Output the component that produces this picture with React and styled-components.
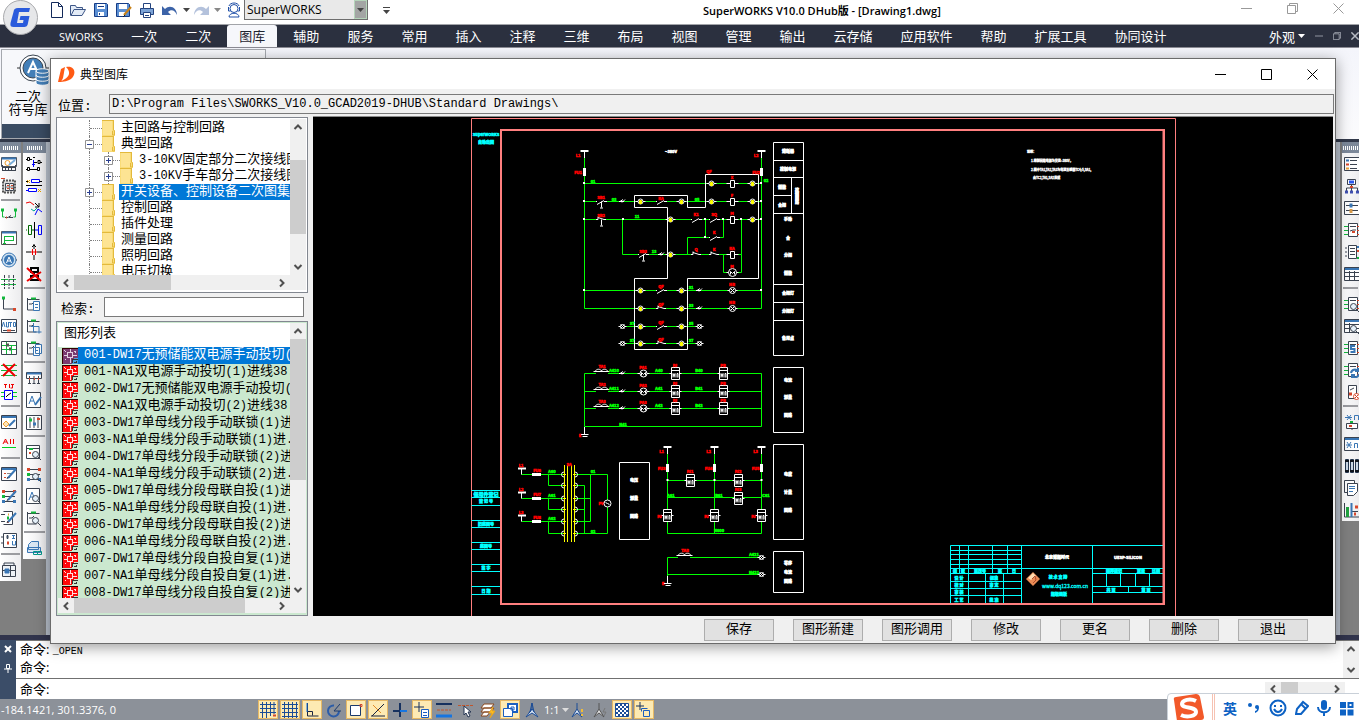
import React, { useState } from "react";
import styled, { createGlobalStyle } from "styled-components";

const dark = "#3b4350";
const blue = "#3a77b5";
const green = "#12b83c";
const red = "#d7472b";

const GlobalStyle = createGlobalStyle`
  * {
    box-sizing: border-box;
  }
  body {
    margin: 0;
    background: #808080;
    font-family: "Open Sans", "Noto Sans CJK SC", sans-serif;
    font-size: 13px;
    color: #000;
  }
  button, input, select {
    font: inherit;
    color: inherit;
    margin: 0;
    padding: 0;
  }
  ul {
    list-style: none;
    margin: 0;
    padding: 0;
  }
  svg {
    display: block;
    flex: none;
  }
`;

/* ---------- application shell ---------- */

const Screen = styled.div`
  position: relative;
  display: flex;
  flex-direction: column;
  min-height: 100vh;
  overflow: hidden;
`;

const TitleBar = styled.header`
  display: flex;
  align-items: center;
  height: 24px;
  padding-left: 48px;
  background: #fff;
`;

const AppLogo = styled.div`
  position: absolute;
  z-index: 1;
  top: 0;
  left: 3px;
`;

const QuickAccess = styled.div`
  display: flex;
  align-items: center;
  height: 20px;
  align-self: flex-start;
`;

const QuickButton = styled.button`
  display: flex;
  justify-content: center;
  align-items: center;
  width: ${(props) => props.$width || 22}px;
  height: 20px;
  border: none;
  background: none;
`;

const WorkspaceSelect = styled.div`
  display: flex;
  width: 124px;
  height: 20px;
  border: 1px solid #6e6e6e;
  border-top: none;
  background: #e9e9e9;
`;

const Select = styled.select`
  flex: 1;
  appearance: none;
  border: none;
  background: transparent;
  padding-left: 2px;
  font-size: 12px;
`;

const SelectArrow = styled.span`
  display: flex;
  align-items: center;
  justify-content: center;
  width: 13px;
  background: #a3a5a4;
  border: 1px solid #b5d5ba;
`;

const WindowTitle = styled.h1`
  flex: 1;
  margin: 0 0 2px;
  padding-left: 298px;
  font-size: 11px;
  line-height: 20px;
  font-weight: 600;
  white-space: nowrap;
`;

const WindowControls = styled.div`
  display: flex;
  height: 16px;
  padding-right: 10px;
  gap: 25px;
  align-self: flex-start;
`;

const ControlButton = styled.button`
  display: flex;
  align-items: center;
  justify-content: center;
  width: 21px;
  height: 16px;
  border: none;
  background: none;
`;

const MenuBar = styled.nav`
  display: flex;
  height: 24px;
  padding-left: 45px;
  background: #2b303f;
  border-top: 1px solid #a2a4a9;
  border-bottom: 1px solid #8b8b94;
`;

const MenuItem = styled.button`
  height: 22px;
  border: none;
  margin: ${(props) => (props.$active ? "0 2px" : "0")};
  padding: 0 ${(props) => (props.$active ? 12 : 14)}px;
  border-radius: 3px 3px 0 0;
  background: ${(props) => (props.$active ? "#f6f7fb" : "transparent")};
  color: ${(props) => (props.$active ? "#1f2430" : "#fff")};
  line-height: 21px;
  white-space: nowrap;
`;

const MenuLatin = styled.span`
  font-size: 11px;
`;

const MenuRight = styled.div`
  display: flex;
  align-items: center;
  gap: 10px;
  margin-left: auto;
  color: #fff;
`;

const AppearanceButton = styled.button`
  display: flex;
  align-items: center;
  gap: 3px;
  border: none;
  background: none;
`;

const Ribbon = styled.section`
  height: 94px;
  padding: 1px;
  background: linear-gradient(#f4f5fb, #fbfbfd);
  border-bottom: 3px solid #32394a;
`;

const RibbonPanel = styled.div`
  display: flex;
  flex-direction: column;
  width: 265px;
  height: 90px;
  border: 1px solid #a5a8ae;
  background: #f7f8fb;
`;

const RibbonButton = styled.button`
  display: flex;
  flex-direction: column;
  align-items: center;
  width: 52px;
  height: 74px;
  padding-top: 4px;
  border: none;
  background: none;
  line-height: 13px;
`;

const RibbonIcon = styled.span`
  padding: 0 0 4px 10px;
`;

const RibbonCaption = styled.div`
  flex: 1;
  background: #3a4c63;
`;

const Workspace = styled.main`
  display: flex;
  flex: 1;
  align-items: flex-start;
  min-height: 493px;
  background: #7f7f7f;
`;

const ToolColumn = styled.div`
  width: ${(props) => props.$width}px;
  margin-right: ${(props) => props.$gap || 0}px;
  overflow: hidden;
  background: linear-gradient(90deg, #fff, #ececee);
`;

const Grip = styled.div`
  display: flex;
  align-items: center;
  justify-content: center;
  height: 11px;
  background: #7c8899;
`;

const GripDots = styled.span`
  width: 16px;
  height: 4px;
  background: repeating-linear-gradient(90deg, #fff 0 1px, transparent 1px 2px);
`;

const ToolButton = styled.button`
  display: flex;
  align-items: center;
  height: 22px;
  padding-left: ${(props) => props.$inset}px;
  border: none;
  background: none;
`;

const ToolDivider = styled.hr`
  height: 2px;
  margin: 2px 1px 4px;
  border: none;
  background: #9b9ca0;
`;

const DocumentFrame = styled.div`
  flex: 1;
  align-self: stretch;
  margin-right: 2px;
  border: solid #b9c1cd;
  border-width: 0 4px;
  background: #000;
`;

const CommandPane = styled.section`
  display: flex;
  height: 64px;
  border-top: 5px solid #31344c;
  background: #fff;
`;

const CommandHandle = styled.div`
  display: flex;
  flex-direction: column;
  align-items: center;
  gap: 10px;
  width: 16px;
  padding-top: 5px;
  background: #3b4d68;
`;

const CommandBody = styled.div`
  flex: 1;
  border-top: 1px solid #777;
`;

const CommandHistory = styled.div`
  display: flex;
  justify-content: space-between;
  height: 38px;
  padding-left: 4px;
  border-bottom: 1px solid #707070;
`;

const HistoryLine = styled.div`
  height: 18px;
  line-height: 17px;
`;

const CommandEcho = styled.span`
  font-family: "Liberation Mono", monospace;
  font-size: 10px;
`;

const CommandRow = styled.div`
  display: flex;
  align-items: center;
  height: 19px;
  padding-left: 4px;
`;

const CommandLine = styled.label`
  display: flex;
  flex: 1;
  align-items: center;
`;

const CommandInput = styled.input`
  flex: 1;
  border: none;
  outline: none;
`;

const CommandScroll = styled.div`
  display: flex;
  width: 80px;
  height: 13px;
  margin-right: 14px;
`;

const StatusBar = styled.footer`
  display: flex;
  align-items: center;
  height: 21px;
  background: #8c9199;
  color: #fff;
`;

const Coordinates = styled.span`
  width: 258px;
  padding-left: 1px;
  font-size: 11px;
`;

const StatusButton = styled.button`
  display: flex;
  align-items: center;
  justify-content: center;
  width: 20px;
  height: 19px;
  margin-right: 2px;
  border: 1px solid ${(props) => (props.$on ? "#e5b865" : "transparent")};
  background: ${(props) => (props.$on ? "#fdeab3" : "transparent")};
`;

const ScaleButton = styled.button`
  display: flex;
  align-items: center;
  gap: 3px;
  width: 24px;
  border: none;
  background: none;
  font-size: 11px;
`;

const InputMethodBar = styled.aside`
  position: absolute;
  right: -4px;
  bottom: -3px;
  display: flex;
  align-items: center;
  gap: 8px;
  width: 196px;
  height: 30px;
  padding-left: 5px;
  background: #fff;
  border: 1px solid #c9d0d8;
  border-radius: 4px;
  color: #0d62c4;
  font-weight: 700;
  font-size: 14px;
`;

const BarSeparator = styled.span`
  width: 3px;
  height: 28px;
  border: solid #f6c2b2;
  border-width: 0 1px;
`;

/* ---------- dialog ---------- */

const Dialog = styled.section`
  position: absolute;
  top: 58px;
  right: 23px;
  bottom: 76px;
  left: 50px;
  display: flex;
  flex-direction: column;
  background: #f0f0f0;
  border: 1px solid #6b6b6b;
  box-shadow: 0 3px 14px rgba(0, 0, 0, 0.4);
  font-family: "Liberation Mono", "Noto Sans CJK SC", monospace;
`;

const DialogTitle = styled.div`
  display: flex;
  align-items: center;
  height: 30px;
  padding: 0 12px 0 7px;
  background: #fff;
`;

const DialogHeading = styled.h2`
  flex: 1;
  margin: 0 0 0 5px;
  font-size: 12px;
  font-weight: 400;
`;

const DialogControls = styled.div`
  display: flex;
  gap: 25px;
`;

const LocationRow = styled.div`
  display: flex;
  align-items: center;
  height: 28px;
  padding: 2px 1px 0 7px;
`;

const FieldLabel = styled.label`
  width: ${(props) => props.$width}px;
`;

const TextField = styled.input`
  flex: 1;
  min-width: 0;
  height: 20px;
  padding: 0 2px;
  border: 1px solid #7a7a7a;
  background: ${(props) => (props.readOnly ? "#f0f0f0" : "#fff")};
  font-size: 12px;
`;

const DialogBody = styled.div`
  display: flex;
  flex: 1;
  min-height: 0;
  gap: 5px;
  padding: 0 2px 0 5px;
`;

const SidePanel = styled.div`
  display: flex;
  flex-direction: column;
  width: 252px;
`;

const ScrollBox = styled.div`
  display: grid;
  grid-template-columns: 1fr 16px;
  grid-template-rows: 1fr 15px;
  min-height: 0;
  height: ${(props) => props.$height || "auto"};
  flex: ${(props) => (props.$height ? "none" : 1)};
  padding: 1px 1px 2px;
  border: 1px solid #828790;
  background: ${(props) => props.$background || "#fff"};
`;

const ScrollTrack = styled.div`
  display: flex;
  flex: ${(props) => (props.$horizontal ? 1 : "none")};
  flex-direction: ${(props) => (props.$horizontal ? "row" : "column")};
  align-items: center;
  background: #f0f0f0;
`;

const ScrollCorner = styled.div`
  background: #f0f0f0;
`;

const ScrollEnd = styled.button`
  display: flex;
  align-items: center;
  justify-content: center;
  width: 16px;
  height: ${(props) => props.$height || 16}px;
  border: none;
  background: none;
`;

const ScrollSpace = styled.div`
  flex: ${(props) => props.$grow};
  align-self: stretch;
  background: ${(props) => (props.$thumb ? "#cdcdcd" : "transparent")};
`;

const Tree = styled.ul`
  overflow: hidden;
  padding: 1px 0 0 31px;
`;

const TreeRow = styled.li`
  position: relative;
  display: flex;
  align-items: center;
  height: 16px;
  padding-left: ${(props) => (props.$level === 2 ? 18 : 0)}px;
  border-left: 1px dotted #808080;
`;

const Branch = styled.span`
  display: flex;
  align-items: center;
  flex: none;
  width: 12px;
  height: 16px;
  border-left: ${(props) => (props.$level === 2 ? "1px dotted #808080" : "none")};

  &::after {
    content: "";
    flex: 1;
    border-top: 1px dotted #808080;
  }
`;

const Expander = styled.button`
  position: absolute;
  top: 4px;
  left: ${(props) => (props.$level === 2 ? 14 : -5)}px;
  width: 9px;
  height: 9px;
  border: none;
  background: none;
`;

const TreeLabel = styled.span`
  flex: ${(props) => (props.$selected ? "1 0 auto" : "none")};
  height: 16px;
  margin-left: 3px;
  padding-left: 2px;
  line-height: 15px;
  white-space: nowrap;
  background: ${(props) => (props.$selected ? "#0078d7" : "transparent")};
  color: ${(props) => (props.$selected ? "#fff" : "#000")};
`;

const SearchRow = styled.div`
  display: flex;
  align-items: center;
  height: 28px;
  padding: 0 4px 0 5px;
`;

const ListPane = styled.div`
  overflow: hidden;
`;

const ListHeader = styled.div`
  height: 24px;
  padding-left: 6px;
  line-height: 22px;
  background: #fff;
`;

const ListRow = styled.button`
  display: flex;
  align-items: center;
  width: 100%;
  height: 17px;
  padding-left: 4px;
  border: none;
  background: none;
  text-align: left;
`;

const ListName = styled.span`
  flex: 1;
  height: 17px;
  padding-left: 6px;
  overflow: hidden;
  line-height: 16px;
  white-space: nowrap;
  background: ${(props) => (props.$selected ? "#0078d7" : "transparent")};
  color: ${(props) => (props.$selected ? "#fff" : "#000")};
`;

const Latin = styled.span`
  font-size: 12px;
`;

const Viewer = styled.div`
  flex: 1;
  min-width: 0;
  background: #000;
  border-top: 1px solid #8a8a8a;
  margin-top: -1px;
`;

const DialogFooter = styled.div`
  display: flex;
  justify-content: flex-end;
  gap: 19px;
  padding: 3px 27px 2px 0;
`;

const FooterButton = styled.button`
  width: 70px;
  height: 22px;
  border: 1px solid #adadad;
  background: #e1e1e1;
  line-height: 18px;
`;

/* ---------- icons ---------- */

const pane = [
  [dark, "M.5 1.5h15v13H.5z", "#fff"],
  [blue, "M1 3h14", null, 2],
];
const lens = [
  [dark, "M12.5 10.5a3 3 0 1 1-6 0a3 3 0 0 1 6 0M12 13l3 3", "#e6f1fa"],
];
const sheet = [
  [dark, "M1.5 2v12h9M1.5 3.5h12M3 8h3l2-2"],
  [green, "M5 2.5h5", null, 2],
];
const pencil = [
  [blue, "M7 12l8-9", null, 2],
  [dark, "M6 13l1-2"],
];
const pins = [
  [dark, "M4.5 1.5h9v13h-9zM6 4.5h6", "#fff"],
  [green, "M0 4.5h4M0 8.5h4M0 12.5h4"],
  [red, "M13 4.5h3M13 8.5h3M13 12.5h3"],
];
const rail = [
  [dark, "M2 3.5h12M2 8.5h12M2 13.5h12"],
  [red, "M1 3.5h3M12 3.5h3", null, 3],
  [green, "M1 8.5h3", null, 3],
  [blue, "M1 13.5h3M12 13.5h3", null, 3],
];

const glyphs = {
  tableEdit: [["#4d5560", "M.5 1.5h15v9H.5z", "#fff", 1], [blue, "M1 2.5h14", null, 2], [dark, "M1 11.5h14M2 14.5h13M1.5 9v6M4.5 11v4M7.5 11v4M10.500 11v4M14.500 9v6"], ["#f0a030", "M9 7a2.500 2.500 0 1 1-5 0a2.500 2.500 0 0 1 5 0"], ["#7aaedb", "M8 9l6-5", null, 2]],
  chip: [["#555", "M2 2.5h12v12H2z", "#ddd", 2, "2 1"], [dark, "M4.500 5.500h8v7h-8z", "#eee"], ["#777", "M8.500 5v8M4 9h9"], [red, "M0 .5h4M6 7.5h2M10 7.5h2M6 10.5h2M10 10.5h2"]],
  wire: [[green, "M1.5 2v7h2M14.5 2v7h-2"], [green, "M0 2h3M13 2h3", null, 3], [dark, "M4 9.5h3l3-2M8 9.5h4"], [red, "M5 9.5h1", null, 2]],
  sheetGreen: [["#555", "M.5 1.5h15v13H.5z", "#fff"], [blue, "M1 2.500h14", null, 2], [green, "M3.5 6v8M3 6.5h10M3 10.5h10M12.5 6v5M2 13.5h3"]],
  motor: [[blue, "M15 8a7 7 0 1 1-14 0a7 7 0 0 1 14 0", "#cfe0ef"], ["none", "M13 8a5 5 0 1 1-10 0a5 5 0 0 1 10 0", blue], ["#fff", "M5.5 11L8 5l2.500 6M6.500 9h3"], [dark, "M0 8h1M15 8h1"]],
  crossWires: [[green, "M0 5.500h16M0 10.500h16", null, 1, "7 1"], [dark, "M3.500 1v14M8 1v14M12.500 1v14", null, 1, "3 1"]],
  corner: [[dark, "M2.500 2v11h11"], [green, "M1 2h3", null, 3], [red, "M12 13.500h3", null, 3]],
  auto: [[dark, "M.5 1.500h15v13H.5z", "#fff"], [blue, "M1 9l1.500-5l1.500 5M5.500 4v5h2V4M8 4.500h3M9.500 4v5M12.500 4.500h2v4h-2z"], [dark, "M2 12.500h12"], [red, "M6 12.500h4", null, 2]],
  grid: [[dark, "M.5 1.500h15v13H.5z", "#fff"], [green, "M1 5.500h14M1 9.500h14M5.500 2v12M10.500 6v8"], ["#555", "M5 5h3M8 9h2", null, 3]],
  deleteWire: [[green, "M0 3.500h16M0 8.500h16M0 13.500h16"], ["#f00000", "M2 2l12 12M14 2L2 14", null, 2]],
  tij: [["#e00", "M3 .5h3M4.500 0v4M8.500 0v4M10 .5h3M11.500 0v4h-2"], ["#00d020", "M0 8.500h16M0 12.500h16"], ["#00f", "M3.500 6.500h8v9h-8z", "#fff"], ["#000", "M5 13l2-2l3-2"]],
  paneEdit: [...pane, ["#f0a030", "M5 7l3 3l-3 3l-3-3z", "#fde3b8"], [blue, "M8 12l6-6", null, 2]],
  all: [["#e00", "M2 8l2.500-5L7 8M3 6h3M9.500 3v5M12.500 3v5"], ["#00d020", "M1 11.500h14"]],
  listEdit: [...pane, [red, "M3 7.500h2M3 11.500h2"], ["#888", "M6 7.500h5M6 11.500h3"], ...pencil],
  railEdit: [...rail, ...pencil],
  stackEdit: [[dark, "M2.500 1.500h9v13h-9M0 4.500h4M0 11.500h4", "#fff"], ["#e0a030", "M7 4.500h1", null, 2], [green, "M6 8h2", null, 3], [red, "M6 12h2", null, 2], ...pencil],
  iu: [[dark, "M2.500 1.500h13v14h-13zM0 5h3M0 11h3", "#fff"], [dark, "M6 3.500h1v3H6z", blue], [blue, "M11 3.500h3M12.500 3v4M11 6.500h3M11.500 9v4h3V9"], [red, "M6 11h2", null, 3]],
  printSheet: [[dark, "M1.500 3.500h13v11h-13zM3 3V1h10v2M1 8.500h14M9.500 4v10", "#eef2f6"], [blue, "M4 7h4v4H4z", blue]],
  nodes: [["#000", "M1.500 1.500h2v3h-2zM7 1.500h2M12 4.500h2v3h-2zM1.500 11.500h2v3h-2zM11.500 11.500h2v3h-2zM3 3.500h3M14 6.500h2M8 6.500h3M4 13.500h7M0 3.500h1M0 13.500h1"], ["#00f", "M7.500 4v7M6 8.500h3"]],
  relay: [["#00f", "M5.500 1.500h8v3h-8zM2.500 10.500h8v3h-8zM0 12.500h2", "#fff"], ["#000", "M0 7.500h16M0 3.500h3M13 3.500h3"], ["#e5a000", "M1 2l3 3M4 2L1 5M12 11l3 3M15 11l-3 3"]],
  breakLine: [["#e00", "M0 3l4-1l4 3"], ["#000", "M9 3l4 4M13 3v4h-4"], ["#0a9", "M5 9l3 2l3-3"], ["#00f", "M9 15l3-6l4 3"]],
  capsules: [["#060", "M0 8h1M2.500 3.500h3v9h-3zM5 8h3"], ["#000", "M8.500 0v16"], ["#00f", "M12.500 3.500h3v9h-3zM9 8h3"]],
  junction: [["#000", "M8 0v5M8 11v5M0 8h5M11 8h5M8 1L6 3M8 1l2 2"], ["#e00", "M5 8h6M6.500 5v6M9.500 5v6"]],
  noRelay: [["#000", "M5 2h7v4H5zM5 10h7v4H5zM8 6v4", null, 2], ["#f00000", "M1 2l14 13M15 6L1 15", null, 2]],
  sheetCopy: [...sheet, [blue, "M7.500 5.500h6v9h-6zM9 8.500h3M9 11.500h3", "#fff"]],
  sheetCrop: [...sheet, [blue, "M7.500 5v9h8M5 8.500h8v7"]],
  sheetPages: [...sheet, [blue, "M9.500 4.500h6v9h-6zM7.500 7.500h6v8h-6zM9 10.500h3", "#fff"]],
  terminals: [[dark, "M.5 2.500h15v6H.5z", "#fff"], [blue, "M1 3.500h14", null, 2], [dark, "M3.500 6v8M8 6v8M12.500 6v8M2 13.500h3M6.500 13.500h3M11 13.500h3"], [red, "M3 9h1M8 9h1M12 9h1", null, 2]],
  textEdit: [[dark, "M.5 .5h14v15H.5z", "#fff"], [blue, "M3 12l3-8l3 8M4 9h4"], [blue, "M9 13l6-8", null, 2]],
  sliders: [[dark, "M.5 1.500h15v14H.5zM4 3v11M8 3v11M12 3v11", "#fff"], [green, "M3 6h3", null, 3], [blue, "M7 10h3", null, 3], [red, "M11 5h3", null, 2]],
  sheetFind: [[dark, "M.5 1.500h13v13H.5zM1 4.500h12", "#fff"], [green, "M3 5h4", null, 2], [red, "M3 9h2", null, 2], ...lens],
  railFind: [...rail, ...lens],
  textFind: [[dark, "M.5 .5h13v15H.5z", "#fff"], [blue, "M3 12l3-8l3 8M4 9h4"], ...lens],
  tagFind: [...sheet, ...lens],
  printLink: [[blue, "M2.500 9.500v-5l3-3h7v8zM1.500 7.500h13v5h-13z", "#d9e6f2"], ["#009688", "M7.500 11.500h4v3h-4zM11.500 11.500h4v3h-4"]],
  legend: [[dark, "M.5 1.500h15v13H.5zM6 4.500h7M6 8.500h7M6 12.500h7", "#fff"], [blue, "M2 4.500h3", null, 2], [red, "M2 8.500h3", null, 2], ["#e9a23b", "M2 12.500h3", null, 2]],
  hierarchy: [[dark, "M3.500 1.500h8v5h-8zM7.500 6v8M2.500 13v-3h11v3", "#fff"], ["#2957f0", "M5 4h5", null, 3], ["#4050b0", "M1 14h3M6 14h3M12 14h3", null, 3], [red, "M6 9h3", null, 2]],
  tuning: [[dark, "M.5 1.500h15v13H.5zM2 5.500h12M2 10.500h12", "#fff"], [blue, "M7 3.500v4", null, 3], ["#d79a4a", "M7 9v4", null, 3]],
  board: [...pins, [dark, "M6 9l3-1h3"], [red, "M8 10h3", null, 2]],
  connector: [[dark, "M4.500 1.500h8v13h-8zM6 4.500h5M6 7.500h5M6 10.500h5M1 4h2M1 8h2M1 12h2", "#fff"], [blue, "M13 3h3", null, 2], [red, "M13 7h3", null, 2], [green, "M13 14h3", null, 2]],
  table: [...pane, [dark, "M1 6.500h14M1 10.500h14M5.500 5v9M10.500 5v9"]],
  boardFind: [...pins, ...lens],
  tableFind: [...pane, [dark, "M1 6.500h14M1 10.500h14M5.500 5v9"], ...lens],
  boardS: [...pins, [blue, "M11 6H7v3h3.500v3H6.500", null, 2]],
  boardSync: [...pins, [blue, "M7 11a4 4 0 0 1 7-2M15 12a4 4 0 0 1-7 2M14 6v3h-3M8 16v-3h3", null, 2]],
  boardStop: [[dark, "M4.500 1.500h8v13h-8z", "#fff"], [dark, "M6 6l4-2"], [red, "M5 10h3", null, 3], [red, "M15.500 12.500a3 3 0 1 1-6 0a3 3 0 0 1 6 0M11 11l3 3M14 11l-3 3", "#fff"]],
  variable: [[blue, "M3 1l4 5M7 1L3 6M1 3.500h7M10.500 6V1.500h4V6"], [dark, "M2.500 9.500h11v5h-11zM8 14v2", "#fff"], [green, "M6 8h3", null, 2], [red, "M5 12h3", null, 2]],
  paneVariable: [...pane, [blue, "M3 6l4 6M7 6l-4 6M2 9h6M10.500 12V7.500h3V12"]],
  cylinders: [["#24364e", "M1.500 1.500h3v13h-3zM6.500 1.500h3v13h-3zM11.500 1.500h3v13h-3z", "#cbd8e6"], ["#10151d", "M1 3h4M6 3h4M11 3h4M1 13h4M6 13h4M11 13h4", null, 2]],
  pages: [[dark, "M.5 .5h10v12H.5z", "#fff"], [dark, "M3.500 3.500h10v8l-4 4h-6z", "#fff"], [blue, "M5 6.500h6M5 8.500h6M5 11.500h4"]],
  barChart: [[dark, "M.5 1v14H15M8 9.500h6"], ["#22a340", "M3.500 5v10", null, 3], [blue, "M7.500 1v14", null, 2], [red, "M11 5h3M10 12h2", null, 3]],
  gridSnap: [["#1b4c96", "M0 2.500h16M0 6.500h16M0 10.500h16M2.500 0v16M6.500 0v16M10.500 0v14M14 0v12"], [red, "M13 13.500h3", null, 2]],
  gridPlain: [["#1b4c96", "M0 2.500h16M0 6.500h16M0 10.500h16M0 14.500h16M2.500 0v16M6.500 0v16M10.500 0v16M14.500 0v16"]],
  ortho: [["#1a2440", "M3.500 1v13h11M3.500 9.500h5v4"], ["#1675e0", "M3 1v9"]],
  polar: [["#2b5ca8", "M13 9a5.500 5.500 0 1 1-5-5.500", null, 2], ["#1b3a6d", "M8 9h7M8 9l6-7"]],
  osnap: [["#1b3a6d", "M2.500 3.500h10v10h-10z", "#fff"], [red, "M12 2.500h2v2h-2z"]],
  otrack: [["#1a2440", "M1 14h14M2 14L14 2"], ["#e08b28", "M3 3l8 8"]],
  ducs: [["#16315f", "M8 1v14M1 9h14", null, 2], ["#1675e0", "M8 9h7", null, 2]],
  dynamic: [["#16315f", "M5 0v10M0 5h10"], ["#1b5fc0", "M7.500 7.500h7v8h-7zM9 10.500h4M9 13.500h4", "#fff"]],
  weight: [["#16315f", "M0 2h16", null, 2], ["#c0562c", "M1 8h14", null, 1, "3 1"], ["#1675e0", "M0 14h16", null, 3]],
  cursor: [["#c0562c", "M0 3.500h15", null, 1, "3 1"], ["#253552", "M6 4v9l2-2l2 4l2-1l-2-4h3z", "#fff"]],
  flash: [["#8b4a20", "M4 2h10l-3 4H1zM4 6h10l-3 4H1zM4 10h6l-3 4H1z", "#fff"], ["#e9a51e", "M13 5l-4 6h3l-2 5l5-7h-3z", "#ffc020"]],
  overlap: [["#1b5fc0", "M6 2h9v8H6z", "#fff", 2], ["#1b5fc0", "M1.500 6.500h9v8h-9z", "#fff"], ["#1b5fc0", "M9 5h3v3H9z"]],
  scale: [["#1b4c96", "M8 1v6M8 7l-6 8l6-4l6 4L8 7L5 11", "#d7e3f4"], ["#1b4c96", "M8 1l-2 9M8 1l2 9"]],
  scaleTip: [["#1b4c96", "M7 1v6M7 7l-5 8l5-4l5 4z", "#d7e3f4"], ["#f0bc38", "M12 7v3M12 12v2", null, 2]],
  scaleFlash: [["#555", "M7 1v6M7 7l-5 8l5-4l5 4z", "#ddd"], ["#777", "M13 6l-2 4h3l-2 4"]],
  pattern: [["#1b4c96", "M1.500 1.500h13v13h-13z", "#fff"], ["#1b4c96", "M2 3h12M2 7h12M2 11h12", null, 2, "2 2"], ["#1b4c96", "M4 5h10M4 9h10M4 13h10", null, 2, "2 2"]],
  addBox: [["#16315f", "M4 0v8M0 4h8"], ["#1b5fc0", "M5.500 9.500v-3h6M7.500 8.500h6v6h-6z"]],
  newFile: [["#12295a", "M2.500 .5h7l4 4v11h-11zM9.500 .5v4h4", "#fff"]],
  open: [["#3d5687", "M.5 13.500V3.500h5l1 2h6v2M1 13.500l3-6h11.500l-3.500 6z", "#e3ebf6"]],
  save: [["#163c86", "M1.500 1.500h12l1 1v12h-13z", "#5b8fd3"], ["none", "M4 2h8v5H4zM5 10h6v4H5z", "#fff"], ["#163c86", "M5 4.500h6M6.500 11v2"]],
  saveAs: [["#163c86", "M.5 1.500h12l1 1v12H.5z", "#5b8fd3"], ["none", "M3 2h8v5H3zM3 10h6v4H3z", "#fff"], ["#c98218", "M8 13l7-8", null, 2], ["#222", "M7 15l2-2"]],
  printer: [["#24437e", "M1.500 6.500h13v6h-13z", "#7ca3d6"], ["#24437e", "M4.500 1.500h7v5h-7zM4.500 10.500h7v5h-7zM6 13.500h4", "#fff"]],
  undo: [["none", "M0 4v9h9L6 10c3-3 7-2 9 3C15 6 8 2 3 7z", "#3c63a8"]],
  redo: [["none", "M16 4v9H7l3-3C7 7 3 8 1 13C1 6 8 2 13 7z", "#b4c2dc"]],
  support: [["#2050a8", "M12 6.500a4 4 0 1 1-8 0a4 4 0 0 1 8 0M3 15c0-5 10-5 10 0zM2.500 5v4h2M13.500 5v4h-2M3 4c1-4 9-4 10 0", "#fff"]],
};

const Glyph = ({ name }) => (
  <svg width="16" height="16" viewBox="0 0 16 16" aria-hidden="true">
    {glyphs[name].map(([stroke, d, fill, width, dash], i) => (
      <path key={i} d={d} stroke={stroke} fill={fill || "none"} strokeWidth={width || 1} strokeDasharray={dash} />
    ))}
  </svg>
);

const turns = { down: 0, up: 180, left: 90, right: 270 };

const Chevron = ({ to }) => (
  <svg width="10" height="10" viewBox="0 0 10 10">
    <path d="M1.500 3L5 6.500L8.500 3" fill="none" stroke="#505050" strokeWidth="2" transform={`rotate(${turns[to]} 5 5)`} />
  </svg>
);

const Triangle = ({ color = "#444" }) => (
  <svg width="7" height="4" viewBox="0 0 7 4">
    <path d="M0 0h7L3.500 4z" fill={color} />
  </svg>
);

const Minimize = ({ color, size = 11 }) => (
  <svg width={size} height={size} viewBox="0 0 11 11"><path d="M0 5.500h11" stroke={color} /></svg>
);
const Maximize = () => (
  <svg width="11" height="11" viewBox="0 0 11 11"><path d="M.5 .5h10v10H.5z" stroke="#000" fill="none" /></svg>
);
const Restore = ({ color, size = 11 }) => (
  <svg width={size} height={size} viewBox="0 0 11 11"><path d="M.5 2.500h8v8h-8zM2.500 2V.5h8v8H9" stroke={color} fill="none" /></svg>
);
const Close = ({ color, width = 1, size = 11 }) => (
  <svg width={size} height={size} viewBox="0 0 11 11"><path d="M.5 .5l10 10M10.500 .5l-10 10" stroke={color} strokeWidth={width} /></svg>
);

const Folder = () => (
  <svg width="14" height="16" viewBox="0 0 14 16">
    <path d="M0 0h11v10h2v6H0z" fill="#f9dc78" />
    <path d="M1 1h9v14H1z" fill="#fde493" />
    <path d="M0 .5h11M11.500 0v10l1 1v4h-2v-4" fill="none" stroke="#e3b93c" />
  </svg>
);

const DrawingIcon = ({ selected }) => (
  <svg width="16" height="17" viewBox="0 0 16 17" shapeRendering="crispEdges">
    <path d="M0 1h16v16H0z" fill={selected ? "#7a3a70" : "#ff0a0a"} />
    <path d="M0 1.500h16M.5 1v16" stroke="#300" />
    <path d="M5.500 5.500h5v5h-5zM8 2v4M8 10v6M2 8.500h4M10 8.500h5M3 4.500h1M12 4.500h2M3 12.500h1M2.500 4v-1M13.500 4v2" fill="none" stroke={selected ? "#e3d0e0" : "#ffdede"} />
    <path d="M16 17v-6h-4l-2 6z" fill={selected ? "#4aa0e0" : "#cbe8cf"} />
    <path d="M10.500 16v-4h5M12 15.500h2v-2" stroke="#333" fill="none" />
  </svg>
);

const BrandLogo = () => (
  <svg width="36" height="36" viewBox="0 0 36 36">
    <circle cx="17.500" cy="17.500" r="17" fill="#e6e7e9" stroke="#a8a9ac" />
    <path d="M27 8H15c-3 0-4 1-4.500 4L7.500 23c-.5 3 .5 4 3 4h10c3 0 4-1 4.500-4l1.500-7h-9l-1 4h4l-.5 3h-6l2-11h10z" fill="#2a5bdc" />
  </svg>
);

const DLogo = () => (
  <svg width="17" height="17" viewBox="0 0 17 17">
    <path d="M3 3l4-2L5 12l-2 4H0z" fill="#ff5a14" />
    <path d="M8 1c9-2 11 7 5 12c-3 2-7 3-12 3c8-3 14-8 7-15z" fill="#ff5a14" />
  </svg>
);

const MotorDatabase = () => (
  <svg width="32" height="32" viewBox="0 0 32 32">
    <path d="M0 14h32" stroke="#333" />
    <circle cx="16" cy="14" r="13" fill="#fff" stroke="#39434f" />
    <circle cx="16" cy="14" r="10" fill="#437fb8" stroke="#39434f" />
    <path d="M11 19l5-11l5 11M13 15h6" fill="none" stroke="#fff" strokeWidth="2" />
    <path d="M19 17c0-3 13-3 13 0v12c0 3-13 3-13 0z" fill="#437fb8" stroke="#fff" />
    <path d="M19 17c0 3 13 3 13 0M19 21c0 3 13 3 13 0M19 25c0 3 13 3 13 0" fill="none" stroke="#fff" />
  </svg>
);

/* ---------- CAD drawing ---------- */

const lime = "#0f0";
const aqua = "#0ff";
const hot = "#f00";

const Note = ({ x, y, color = "#fff", size = 4, children }) => (
  <text x={x} y={y + 1.5} fill={color} fontSize={size} fontWeight="700" textAnchor="middle" stroke={color} strokeWidth="0.500">
    {children}
  </text>
);

const Contact = ({ x, y, closed }) => (
  <g>
    <path d={`M${x - 5} ${y}h10`} stroke="#000" />
    <path d={closed ? `M${x - 5} ${y}h2v-3M${x - 3} ${y - 2}l6 2h2` : `M${x - 5} ${y}h1M${x - 4} ${y + 3}l7-4M${x + 3} ${y}h3`} stroke="#fff" fill="none" />
  </g>
);

const PushButton = ({ x, y, closed }) => (
  <g>
    <Contact x={x} y={y} closed={closed} />
    <path d={`M${x + 0.5} ${y}v6M${x - 1} ${y + 6.5}h3`} stroke="#fff" />
  </g>
);

const Terminal = ({ x, y }) => (
  <g>
    <path d={`M${x - 5} ${y}h10`} stroke="#fff" />
    <circle cx={x} cy={y} r="2.500" fill="#000" stroke="#fff" />
    <path d={`M${x - 1} ${y - 1}h2v3h-2z`} fill="#ff0" stroke="#ff0" />
  </g>
);

const Plug = ({ x, y }) => <path d={`M${x - 3} ${y}h5M${x - 2} ${y}l3-2M${x} ${y + 1}l3-3`} stroke="#fff" />;

const Coil = ({ x, y }) => (
  <g>
    <path d={`M${x - 6} ${y}h12`} stroke="#fff" />
    <path d={`M${x - 2} ${y - 3}h4v7h-4z`} fill="#000" stroke="#fff" />
  </g>
);

const Lamp = ({ x, y, r = 3 }) => (
  <g stroke="#fff">
    <path d={`M${x - r - 2} ${y}h${r * 2 + 4}`} />
    <circle cx={x} cy={y} r={r} fill="#000" />
    <path d={`M${x - 2} ${y - 2}l4 4M${x + 2} ${y - 2}l-4 4`} />
  </g>
);

const Rotor = ({ x, y, r = 3.5 }) => (
  <g stroke="#fff">
    <path d={`M${x - 6} ${y}h12`} />
    <circle cx={x} cy={y} r={r} fill="#000" />
    <path d={`M${x - 2} ${y + 2}v-3l2 2l2-2v3`} fill="none" />
  </g>
);

const Meter = ({ x, y }) => (
  <g stroke="#fff">
    <path d={`M${x - 6} ${y}h12`} />
    <path d={`M${x - 4} ${y - 6}h8v12h-8z`} fill="#000" />
    <path d={`M${x - 4} ${y - 3}h8M${x - 2.5} ${y + 4}v-4l1 3l1-3v4M${x + 1.5} ${y + 4}v-4h1v4`} fill="none" />
  </g>
);

const Transformer = ({ x, y }) => (
  <path d={`M${x - 8} ${y - 2}h16M${x - 6} ${y - 2}c0-3 6-3 6 0c0-3 6-3 6 0`} fill="none" stroke="#fff" />
);

const Ground = ({ x, y }) => <path d={`M${x} ${y}v8M${x - 4} ${y + 7.5}h8M${x - 2} ${y + 9.5}h5`} stroke="#fff" />;
const Supply = ({ x, y }) => (
  <g>
    <path d={`M${x} ${y}v7`} stroke="#fff" />
    <path d={`M${x - 4} ${y}h8`} stroke="#fff" strokeWidth="2" />
  </g>
);
const Dot = ({ x, y }) => <rect x={x - 1} y={y - 1} width="2" height="2" fill="#fff" />;

const ControlCircuit = () => (
  <g>
    <path
      stroke={lime}
      fill="none"
      d="M584.500 157v151.500h177V157M584.500 183.500h177M584.500 201.500h177M584.500 219.500h177M622.500 219.500v35h119v-35M741.500 254.500v18h-18v-18M705.500 219.500v18M723.500 219.500v18h-36v17M584.500 290.500h177M622.500 326.500h77M622.500 343.500h77"
    />
    <path stroke="#fff" fill="none" d="M705.500 174.500h53v104h-71v71h-53v-71h33v-71h-33v-12h53v12h18z" />
    <path fill="#fff" d="M583 168h3v8h-3zM760 168h3v8h-3z" />
    {[584.5, 761.5].map((x) => <Supply key={x} x={x} y={151} />)}
    <Note x={578} y={155} color={hot}>L1</Note>
    <Note x={756} y={155} color={hot}>L2</Note>
    <Note x={578} y={172} color={hot}>FU1</Note>
    <Note x={756} y={172} color={hot}>FU2</Note>
    <Note x={709} y={171} color={hot}>QF</Note>
    <Note x={671} y={151}>~380V</Note>
    <Note x={593} y={181} color={lime}>01</Note>
    <Note x={766} y={180} color={lime}>02</Note>
    {[183.5, 201.5, 219.5, 254.5].map((y, i) => (
      <g key={y}>
        <Coil x={732.5} y={y} />
        <Note x={732} y={y - 6} color={hot}>{["X", "F", "M", "KA"][i]}</Note>
      </g>
    ))}
    {[[711.5, 183.5], [752.5, 183.5], [640.5, 201.5], [681.5, 201.5], [711.5, 201.5], [752.5, 201.5], [670.5, 219.5], [752.5, 219.5], [670.5, 254.5]].map(([x, y]) => (
      <Terminal key={`${x}-${y}`} x={x} y={y} />
    ))}
    {[201.5, 219.5].map((y, i) => (
      <g key={y}>
        <PushButton x={601} y={y} closed={i === 1} />
        <Note x={601} y={y - 4} color={hot}>{`SB${i + 1}`}</Note>
      </g>
    ))}
    <PushButton x={643} y={254.5} />
    <Note x={643} y={251} color={hot}>SB3</Note>
    <Note x={614} y={199} color={lime}>03</Note>
    <Note x={637} y={216} color={lime}>11</Note>
    <Note x={697} y={199} color={lime}>05</Note>
    <Note x={654} y={251} color={lime}>13</Note>
    <Contact x={661} y={201.5} />
    <Note x={661} y={198} color={hot}>KA</Note>
    {[[696, 219.5, "K1"], [714, 219.5, "SQ"], [714, 237.5, "K"], [696, 254.5, "Q"], [714, 254.5, "K"]].map(([x, y, label]) => (
      <g key={`${x}-${y}`}>
        <Contact x={x} y={y} closed={y > 250} />
        <Note x={x} y={y - 5} color={hot}>{label}</Note>
      </g>
    ))}
    <Rotor x={732.5} y={272.5} r={4} />
    <Note x={732} y={266} color={hot}>M</Note>
    <Plug x={622} y={201.5} />
    <Plug x={661} y={254.5} />
    {[290.5, 308.5, 326.5, 343.5].map((y, i) => (
      <g key={y}>
        <Terminal x={640.5} y={y} />
        <Contact x={661} y={y} closed={i % 2 === 1} />
        <Terminal x={681.5} y={y} />
        <Note x={661} y={y - 4} color={hot}>QF</Note>
        <Note x={691} y={y - 3} color={lime}>{31 + i * 2}</Note>
        {i < 2 ? (
          <g>
            <Plug x={699} y={y} />
            <Lamp x={732.5} y={y} />
            <Note x={732} y={y - 6} color={hot}>HR</Note>
          </g>
        ) : (
          <g>
            <Lamp x={622.5} y={y} r={2} />
            <Lamp x={699.5} y={y} r={2} />
            <Note x={632} y={y - 3} color={lime}>37</Note>
          </g>
        )}
      </g>
    ))}
    {[[584, 183], [584, 201], [584, 219], [584, 290], [761, 183], [761, 201], [761, 219], [761, 290], [623, 219], [705, 219], [723, 219], [741, 219], [705, 237]].map(([x, y]) => (
      <Dot key={`${x}-${y}`} x={x} y={y} />
    ))}
    <path stroke="#fff" fill="none" d="M773.500 142.500h30v213h-30zM773.500 160.500h30M773.500 177.500h30M773.500 213.500h30M773.500 284.500h30M773.500 302.500h30M773.500 320.500h30M791.500 177.500v36M773.500 195.500h18" />
    <Note x={788} y={151}>熔断器</Note>
    <Note x={788} y={169}>控制电源</Note>
    <Note x={782} y={187}>储能</Note>
    <Note x={782} y={205}>合闸</Note>
    {["控", "制", "回", "路"].map((char, i) => <Note key={char} x={797} y={190 + i * 4}>{char}</Note>)}
    <Note x={788} y={219}>手动</Note>
    <Note x={788} y={238}>合</Note>
    <Note x={788} y={255}>分闸</Note>
    <Note x={788} y={273}>储能</Note>
    <Note x={788} y={293}>合闸灯</Note>
    <Note x={788} y={311}>分闸灯</Note>
    <Note x={788} y={338}>备用点</Note>
  </g>
);

const MeasureCircuit = () => (
  <g>
    <path stroke={lime} fill="none" d="M584.500 373.500h177v53h-177zM584.500 391.500h177M584.500 408.500h177" />
    {[373.5, 391.5, 408.5].map((y, i) => (
      <g key={y}>
        <path d={`M596 ${y}h12`} stroke="#000" />
        <Transformer x={601.5} y={y} />
        <Plug x={622} y={y} />
        <Rotor x={643.5} y={y} />
        <Meter x={675.5} y={y} />
        <Meter x={723.5} y={y} />
        <Note x={602} y={y - 7} color={hot}>{`TA${i + 1}`}</Note>
        <Note x={643} y={y - 6} color={hot}>{`PA${i + 1}`}</Note>
        <Note x={675} y={y - 8} color={hot}>PJ</Note>
        <Note x={723} y={y - 8} color={hot}>PR</Note>
        <Note x={614} y={y - 3} color={lime}>{`A41${i}`}</Note>
        <Note x={659} y={y - 3} color={lime}>{`A4${i}`}</Note>
        <Note x={699} y={y - 3} color={lime}>{`B4${i}`}</Note>
      </g>
    ))}
    <Note x={623} y={424} color={lime}>N41</Note>
    <Ground x={584.5} y={427} />
    <Note x={580} y={435} color={hot}>E</Note>
  </g>
);

const VoltageCircuit = () => (
  <g>
    <path stroke={lime} fill="none" d="M667.500 453v80.500h94V453M714.500 453v80.500M667.500 480.500h94M667.500 497.500h94M667.500 583v-25.500h94M667.500 574.500h94" />
    {[667.5, 714.5, 761.5].map((x, i) => (
      <g key={x}>
        <Supply x={x} y={447} />
        <path d={`M${x - 1.5} 464h3v8h-3z`} fill="#fff" />
        <Meter x={x} y={515.5} />
        <Note x={x - 6} y={451} color={hot}>{`L${i + 1}`}</Note>
        <Note x={x - 6} y={468} color={hot}>{`FU${i + 3}`}</Note>
        <Note x={x - 8} y={516} color={hot}>PJ</Note>
        <Dot x={x} y={480} />
      </g>
    ))}
    <Meter x={690.5} y={480.5} />
    <Meter x={738.5} y={480.5} />
    <Meter x={738.5} y={498.5} />
    <Note x={690} y={471} color={hot}>PJ1</Note>
    <Note x={738} y={471} color={hot}>PJ2</Note>
    <Note x={738} y={489} color={hot}>PJ3</Note>
    <Note x={671} y={495} color={lime}>A61</Note>
    <Note x={719} y={495} color={lime}>B61</Note>
    <Note x={766} y={495} color={lime}>C61</Note>
    <Note x={719} y={530} color={lime}>N600</Note>
    <path d="M678 557.500h12" stroke="#000" />
    <Transformer x={684.5} y={557.5} />
    <Note x={685} y={550} color={hot}>TAn</Note>
    <Lamp x={761.5} y={557.5} r={2} />
    <Lamp x={761.5} y={574.5} r={2} />
    <Note x={754} y={554} color={lime}>A421</Note>
    <Note x={754} y={572} color={lime}>N421</Note>
    <Ground x={667.5} y={576} />
    <Note x={663} y={583} color={hot}>E</Note>
  </g>
);

const TerminalBlock = () => (
  <g>
    <path
      stroke={lime}
      fill="none"
      d="M521.500 474.500h43M548.500 474.500v11h16M521.500 498.500h43M548.500 498.500v11h16M521.500 521.500h43M548.500 521.500v12h16M575 474.500h32.500v59H575M590.500 474.500v47H575M575 498.500h15.500M575 485.500h9.500v48M575 509.500h9.500"
    />
    <path stroke="#ff0" d="M564.500 465v77M567.500 465v77M571.500 465v77M574.500 465v77" />
    {[474.5, 485.5, 498.5, 509.5, 521.5, 533.5].map((y) => (
      <g key={y} fill="none" stroke="#fff">
        <path d={`M564 ${y - 2.5}a2.500 2.500 0 1 0 0 5M575 ${y - 2.5}a2.500 2.500 0 1 1 0 5`} />
        <path d={`M563 ${y}h3M573 ${y}h3`} stroke="#ff0" />
      </g>
    ))}
    {[474.5, 498.5, 521.5].map((y, i) => (
      <g key={y}>
        <path d={`M518 ${y - 6}h8`} stroke="#fff" strokeWidth="2" />
        <path d={`M521.500 ${y - 6}v6`} stroke="#fff" />
        <path d={`M532 ${y - 1.5}h9v3h-9z`} fill="#fff" />
        <Note x={521} y={y - 9} color={hot}>{`L${i + 1}`}</Note>
        <Note x={537} y={y - 4} color={hot}>{`FU${i + 6}`}</Note>
        <Note x={552} y={y - 3} color={lime}>{`A6${i}`}</Note>
      </g>
    ))}
    <Note x={569} y={464} color={hot}>SA</Note>
    <Note x={593} y={471} color={lime}>01</Note>
    <Note x={593} y={531} color={lime}>02</Note>
    <Note x={601} y={503} color={hot}>PV</Note>
    <circle cx="607.500" cy="503.500" r="3.500" fill="#000" stroke="#fff" />
    <path d="M606 502c0 3 3 0 3 3" fill="none" stroke="#fff" />
    <path stroke="#fff" fill="none" d="M619.500 462.500h30v77h-30zM773.500 367.500h30v65h-30zM773.500 444.500h30v95h-30zM773.500 551.500h30v41h-30z" />
    {[
      [634, 480, "电压"], [634, 498, "测量"], [634, 516, "回路"],
      [788, 380, "电流"], [788, 397, "测量"], [788, 415, "回路"],
      [788, 474, "电度"], [788, 492, "计量"], [788, 510, "回路"],
      [788, 563, "零序"], [788, 572, "电流"], [788, 581, "回路"],
    ].map(([x, y, label]) => <Note key={`${x}-${y}`} x={x} y={y}>{label}</Note>)}
  </g>
);

const TitleBlock = () => (
  <g>
    <path
      stroke={aqua}
      fill="none"
      d="M950.500 545.500h213v59h-213zM1021.500 545.500v59M1092.500 545.500v59M950.500 568.500h213M950.500 550.500h71M950.500 554.500h71M950.500 559.500h71M950.500 564.500h71M950.500 573.500h71M950.500 581.500h71M950.500 588.500h71M950.500 595.500h71M959.500 545.500v28M992.500 545.500v28M1007.500 545.500v28M968.500 545.500v59M985.500 573.500v31M1003.500 573.500v31M1092.500 573.500h71M1092.500 586.500h71M1092.500 592.500h71M1106.500 573.500v13M1120.500 573.500v13M1135.500 573.500v13M1149.500 573.500v13M1128.500 586.500v6"
    />
    <Note x={1057} y={557}>北京博超时代</Note>
    <Note x={1128} y={557} size={4}>UESP-SILICON</Note>
    {[
      [955, 571, "标"], [963, 571, "数"], [980, 571, "更改号"], [1000, 571, "签"], [1014, 571, "日"],
      [959, 578, "设 计"], [994, 578, "标准"], [959, 585, "校 对"], [994, 585, "审 定"], [959, 592, "审 核"], [959, 600, "工 艺"], [994, 600, "批 准"],
      [1114, 571, "图样标记"], [1141, 571, "重量"], [1156, 571, "比例"], [1111, 590, "共 页"], [1146, 590, "第 页"],
      [1058, 577, "技 术 支 持"], [1059, 594, "超级画板"],
    ].map(([x, y, label]) => <Note key={`${x}-${y}`} x={x} y={y} color={aqua}>{label}</Note>)}
    <text x="1042" y="588" fontSize="5" fill={aqua} stroke={aqua} strokeWidth="0.300">www.dq123.com.cn</text>
    <path d="M1033 572l7 7l-7 7l-7-7z" fill="#e98b55" />
    <path d="M1033 573l3 3l-5 4l-3-2z" fill="#ffdcae" />
    <path d="M1032 579l3-3l1 4l-3 3" fill="none" stroke="#b04a2c" />
  </g>
);

const CadDrawing = () => (
  <svg width="100%" height="100%" viewBox="313 118 1020 497" fontFamily="Noto Sans CJK SC, sans-serif" role="img" aria-label="电气原理图">
    <path d="M471.500 616V118.500h704V616" fill="none" stroke="#ff7f7f" />
    <path stroke={aqua} d="M471.500 490.500h30M471.500 497.500h30M471.500 505.500h30M471.500 520.500h30M471.500 527.500h30M471.500 542.500h30M471.500 549.500h30M471.500 564.500h30M471.500 571.500h30M471.500 586.500h30M471.500 594.500h30" />
    <Note x={486} y={134} color={aqua}>SuperWORKS</Note>
    <Note x={486} y={142} color={aqua}>自动出图</Note>
    <Note x={486} y={494} color={aqua} size={5}>借用件登记</Note>
    <Note x={486} y={501} color={aqua}>登 记 号</Note>
    <Note x={486} y={524} color={aqua}>旧底图号</Note>
    <Note x={486} y={546} color={aqua}>底图号</Note>
    <Note x={486} y={568} color={aqua}>签 字</Note>
    <Note x={486} y={591} color={aqua}>日 期</Note>
    <ControlCircuit />
    <MeasureCircuit />
    <VoltageCircuit />
    <TerminalBlock />
    <TitleBlock />
    <rect x="501" y="130" width="662.500" height="474" fill="none" stroke="#ff7f7f" strokeWidth="2" />
    <path d="M1164 129v476" stroke="#ff7f7f" strokeWidth="2" />
    <g fill="#fff" stroke="#fff" strokeWidth="0.300" fontSize="3" fontWeight="700">
      <text x="1027" y="153">说明：</text>
      <text x="1031" y="162">1.控制回路电源为交流~380V，</text>
      <text x="1031" y="171">2.图中TA1,TA2,TA3为电流互感器TC4/5,SA1,</text>
      <text x="1033" y="179">由TC2,TA1,SA2构成</text>
    </g>
  </svg>
);

/* ---------- data ---------- */

const menus = ["一次", "二次", "图库", "辅助", "服务", "常用", "插入", "注释", "三维", "布局", "视图", "管理", "输出", "云存储", "应用软件", "帮助", "扩展工具", "协同设计"];

const quickTools = ["newFile", "open", "save", "saveAs", "printer", "undo"];

const leftTools = ["tableEdit", "chip", null, "wire", "sheetGreen", "motor", "crossWires", "corner", "auto", "grid", "deleteWire", "tij", null, "paneEdit", "all", null, "listEdit", "railEdit", "stackEdit", "iu", null, "printSheet"];
const innerTools = ["nodes", "relay", "breakLine", "capsules", "junction", "noRelay", null, "sheetCopy", "sheetCrop", "sheetPages", null, "terminals", "textEdit", "sliders", null, "sheetFind", "railFind", "textFind", "tagFind", null, "printLink"];
const rightTools = ["legend", "hierarchy", "tuning", "board", "connector", "table", null, "boardFind", "tableFind", "boardS", "boardSync", "boardStop", null, "variable", "paneVariable", "cylinders", "pages", "barChart"];

const statusTools = [
  ["gridSnap", true], ["gridPlain", true], ["ortho", true], ["polar", false], ["osnap", true], ["otrack", true],
  ["ducs", false], ["dynamic", true], ["weight", false], ["cursor", false], ["flash", false], ["overlap", true], ["scale", false],
];
const statusToolsEnd = [["scaleTip", false], ["scaleFlash", false], ["pattern", true], ["addBox", true]];

const treeItems = [
  { name: "主回路与控制回路", level: 1 },
  { name: "典型回路", level: 1, sign: "-" },
  { name: "3-10KV固定部分二次接线图", level: 2, sign: "+" },
  { name: "3-10KV手车部分二次接线图", level: 2, sign: "+" },
  { name: "开关设备、控制设备二次图集", level: 1, sign: "+", selected: true },
  { name: "控制回路", level: 1 },
  { name: "插件处理", level: 1 },
  { name: "测量回路", level: 1 },
  { name: "照明回路", level: 1 },
  { name: "电压切换", level: 1 },
];

const drawings = [
  "001-DW17无预储能双电源手动投切(",
  "001-NA1双电源手动投切(1)进线38.",
  "002-DW17无预储能双电源手动投切(",
  "002-NA1双电源手动投切(2)进线38.",
  "003-DW17单母线分段手动联锁(1)进",
  "003-NA1单母线分段手动联锁(1)进.",
  "004-DW17单母线分段手动联锁(2)进",
  "004-NA1单母线分段手动联锁(2)进.",
  "005-DW17单母线分段母联自投(1)进",
  "005-NA1单母线分段母联自投(1)进.",
  "006-DW17单母线分段母联自投(2)进",
  "006-NA1单母线分段母联自投(2)进.",
  "007-DW17单母线分段自投自复(1)进",
  "007-NA1单母线分段自投自复(1)进.",
  "008-DW17单母线分段自投自复(2)进",
];

const actions = ["保存", "图形新建", "图形调用", "修改", "更名", "删除", "退出"];

/* ---------- parts ---------- */

// Latin runs are set one size smaller than the Chinese around them
const MixedText = ({ text }) =>
  text.split(/([\x20-\x7e]+)/).map((part, i) => (i % 2 ? <Latin key={i}>{part}</Latin> : part));

const Toolbar = ({ tools, width, gap, inset }) => (
  <ToolColumn $width={width} $gap={gap}>
    <Grip><GripDots /></Grip>
    {tools.map((name, i) =>
      name ? (
        <ToolButton key={i} $inset={inset} aria-label={name}><Glyph name={name} /></ToolButton>
      ) : (
        <ToolDivider key={i} />
      )
    )}
  </ToolColumn>
);

const Scrollbar = ({ horizontal, before, thumb, after, height }) => (
  <ScrollTrack $horizontal={horizontal}>
    <ScrollEnd $height={height} aria-label={horizontal ? "左" : "上"}><Chevron to={horizontal ? "left" : "up"} /></ScrollEnd>
    <ScrollSpace $grow={before} />
    <ScrollSpace $grow={thumb} $thumb />
    <ScrollSpace $grow={after} />
    <ScrollEnd $height={height} aria-label={horizontal ? "右" : "下"}><Chevron to={horizontal ? "right" : "down"} /></ScrollEnd>
  </ScrollTrack>
);

const TreeNode = ({ item }) => (
  <TreeRow $level={item.level}>
    <Branch $level={item.level} />
    {item.sign && (
      <Expander $level={item.level} aria-label={item.sign === "+" ? "展开" : "折叠"}>
        <svg width="9" height="9" viewBox="0 0 9 9">
          <path d="M.5 .5h8v8h-8z" fill="#fff" stroke="#919191" />
          <path d={item.sign === "+" ? "M2 4.500h5M4.500 2v5" : "M2 4.500h5"} stroke="#2a3f90" />
        </svg>
      </Expander>
    )}
    <Folder />
    <TreeLabel $selected={item.selected}><MixedText text={item.name} /></TreeLabel>
  </TreeRow>
);

const GalleryDialog = () => {
  const [selected, setSelected] = useState(0);
  const [query, setQuery] = useState("");

  return (
    <Dialog role="dialog" aria-labelledby="gallery-title">
      <DialogTitle>
        <DLogo />
        <DialogHeading id="gallery-title">典型图库</DialogHeading>
        <DialogControls>
          <ControlButton aria-label="最小化"><Minimize color="#000" /></ControlButton>
          <ControlButton aria-label="最大化"><Maximize /></ControlButton>
          <ControlButton aria-label="关闭"><Close color="#000" /></ControlButton>
        </DialogControls>
      </DialogTitle>
      <LocationRow>
        <FieldLabel htmlFor="location" $width={51}>位置:</FieldLabel>
        <TextField id="location" readOnly value="D:\Program Files\SWORKS_V10.0_GCAD2019-DHUB\Standard Drawings\" />
      </LocationRow>
      <DialogBody>
        <SidePanel>
          <ScrollBox $height="176px">
            <Tree>{treeItems.map((item) => <TreeNode key={item.name} item={item} />)}</Tree>
            <Scrollbar before={25} thumb={73} after={25} />
            <Scrollbar horizontal height={15} before={0} thumb={97} after={102} />
            <ScrollCorner />
          </ScrollBox>
          <SearchRow>
            <FieldLabel htmlFor="search" $width={43}>检索:</FieldLabel>
            <TextField id="search" value={query} onChange={(e) => setQuery(e.target.value)} />
          </SearchRow>
          <ScrollBox $background="#cbe8cf">
            <ListPane>
              <ListHeader>图形列表</ListHeader>
              {drawings.map((name, i) => (
                <ListRow key={i} onClick={() => setSelected(i)}>
                  <DrawingIcon selected={i === selected} />
                  <ListName $selected={i === selected}><MixedText text={name} /></ListName>
                </ListRow>
              ))}
            </ListPane>
            <Scrollbar before={0} thumb={141} after={102} />
            <Scrollbar horizontal height={15} before={0} thumb={170} after={29} />
            <ScrollCorner />
          </ScrollBox>
        </SidePanel>
        <Viewer><CadDrawing /></Viewer>
      </DialogBody>
      <DialogFooter>
        {actions.map((label) => <FooterButton key={label}>{label}</FooterButton>)}
      </DialogFooter>
    </Dialog>
  );
};

const StatusTools = ({ tools }) =>
  tools.map(([name, on]) => (
    <StatusButton key={name} $on={on} aria-label={name}><Glyph name={name} /></StatusButton>
  ));

const InputMethod = () => (
  <InputMethodBar>
    <svg width="31" height="28" viewBox="0 0 31 28">
      <path d="M1 6Q0 3 3 3L23 0Q26 0 27 3L31 23Q31 26 28 26L7 30Q4 30 4 27z" fill="#f2592a" />
      <path d="M23 7C17 4 9 6 9 10c0 5 14 2 14 8c0 4-9 6-15 3" fill="none" stroke="#fff" strokeWidth="4" />
    </svg>
    <BarSeparator />
    <span>英</span>
    <svg width="16" height="18" viewBox="0 0 16 18">
      <circle cx="5" cy="6" r="2" fill="#0d62c4" />
      <path d="M10 8a2 2 0 0 1 4 0c0 3-1 5-4 6v-2c1 0 2-1 2-2c-1 0-2-1-2-2z" fill="#0d62c4" />
    </svg>
    <svg width="18" height="18" viewBox="0 0 18 18" fill="none" stroke="#0d62c4" strokeWidth="2">
      <circle cx="9" cy="9" r="7.500" />
      <path d="M5 10c2 4 6 4 8 0M6 6v2M12 6v2" />
    </svg>
    <svg width="14" height="18" viewBox="0 0 14 18" fill="none" stroke="#0d62c4" strokeWidth="2">
      <path d="M1 15l1-5l6-7l5 4l-7 8zM6 5l5 5" />
    </svg>
    <svg width="14" height="18" viewBox="0 0 14 18">
      <rect x="4" y="1" width="6" height="10" rx="3" fill="#0d62c4" />
      <path d="M1 8c0 7 12 7 12 0M7 13v4" fill="none" stroke="#0d62c4" strokeWidth="2" />
    </svg>
    <svg width="15" height="15" viewBox="0 0 15 15" fill="#0d62c4">
      <path d="M1 1h6v6H1zM1 8.500h6v6H1zM8.500 8.500h6v6h-6z" />
      <path d="M9.500 2h4v4h-4z" fill="none" stroke="#0d62c4" strokeWidth="2" />
    </svg>
  </InputMethodBar>
);

const App = () => (
  <Screen>
    <GlobalStyle />
    <AppLogo><BrandLogo /></AppLogo>
    <TitleBar>
      <QuickAccess>
        {quickTools.map((name) => (
          <QuickButton key={name} $width={name === "newFile" ? 18 : 23} aria-label={name}><Glyph name={name} /></QuickButton>
        ))}
        <QuickButton $width={10} aria-label="撤销列表"><Triangle /></QuickButton>
        <QuickButton $width={20} aria-label="重做"><Glyph name="redo" /></QuickButton>
        <QuickButton $width={12} aria-label="重做列表"><Triangle color="#888" /></QuickButton>
        <QuickButton $width={21} aria-label="支持"><Glyph name="support" /></QuickButton>
        <WorkspaceSelect>
          <Select aria-label="工作空间"><option>SuperWORKS</option></Select>
          <SelectArrow><Triangle /></SelectArrow>
        </WorkspaceSelect>
        <QuickButton $width={37} aria-label="自定义">
          <svg width="7" height="7" viewBox="0 0 7 7"><path d="M0 .5h7" stroke="#444" /><path d="M0 3h7L3.500 7z" fill="#444" /></svg>
        </QuickButton>
      </QuickAccess>
      <WindowTitle>SuperWORKS V10.0 DHub版 - [Drawing1.dwg]</WindowTitle>
      <WindowControls>
        <ControlButton aria-label="最小化"><Minimize color="#999" /></ControlButton>
        <ControlButton aria-label="还原"><Restore color="#999" /></ControlButton>
        <ControlButton aria-label="关闭"><Close color="#999" /></ControlButton>
      </WindowControls>
    </TitleBar>
    <MenuBar>
      <MenuItem><MenuLatin>SWORKS</MenuLatin></MenuItem>
      {menus.map((label) => <MenuItem key={label} $active={label === "图库"}>{label}</MenuItem>)}
      <MenuRight>
        <AppearanceButton>外观<Triangle color="#fff" /></AppearanceButton>
        <Minimize color="#b8bcc5" size={8} />
        <Restore color="#b8bcc5" size={8} />
        <Close color="#b8bcc5" width={2} size={8} />
      </MenuRight>
    </MenuBar>
    <Ribbon>
      <RibbonPanel>
        <RibbonButton><RibbonIcon><MotorDatabase /></RibbonIcon><span>二次<br />符号库</span></RibbonButton>
        <RibbonCaption />
      </RibbonPanel>
    </Ribbon>
    <Workspace>
      <Toolbar tools={leftTools} width={21} gap={2} inset={1} />
      <Toolbar tools={innerTools} width={23} inset={3} />
      <DocumentFrame />
      <Toolbar tools={rightTools} width={17} inset={2} />
    </Workspace>
    <CommandPane>
      <CommandHandle>
        <svg width="8" height="8" viewBox="0 0 8 8"><path d="M1 1l6 6M7 1L1 7" stroke="#fff" strokeWidth="2" /></svg>
        <svg width="8" height="10" viewBox="0 0 8 10"><path d="M2.500 1.500h3v4h-3zM0 6h8M4 6v4" fill="none" stroke="#fff" /></svg>
      </CommandHandle>
      <CommandBody>
        <CommandHistory>
          <div>
            <HistoryLine>命令: <CommandEcho>_OPEN</CommandEcho></HistoryLine>
            <HistoryLine>命令:</HistoryLine>
          </div>
          <Scrollbar before={1} thumb={0} after={0} />
        </CommandHistory>
        <CommandRow>
          <CommandLine>命令:<CommandInput /></CommandLine>
          <CommandScroll>
            <Scrollbar horizontal height={13} before={0} thumb={17} after={31} />
          </CommandScroll>
        </CommandRow>
      </CommandBody>
    </CommandPane>
    <StatusBar>
      <Coordinates>-184.1421, 301.3376, 0</Coordinates>
      <StatusTools tools={statusTools} />
      <ScaleButton>1:1<Triangle color="#ddd" /></ScaleButton>
      <StatusTools tools={statusToolsEnd} />
    </StatusBar>
    <GalleryDialog />
    <InputMethod />
  </Screen>
);

export default App;
